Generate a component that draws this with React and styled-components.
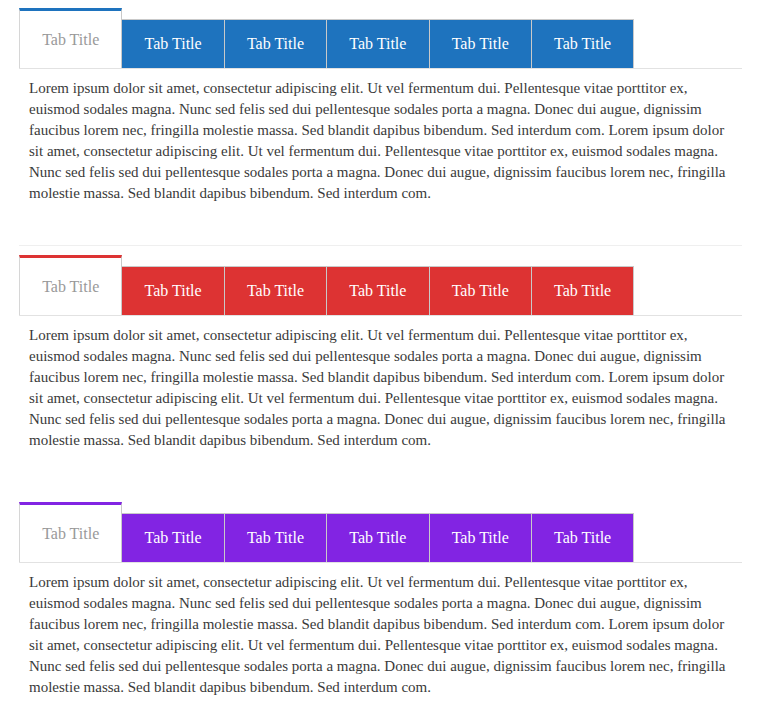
import React from 'react';
import styled, { createGlobalStyle } from 'styled-components';

const GlobalStyle = createGlobalStyle`
  body {
    margin: 0;
    background: #ffffff;
    font-family: "Liberation Serif", "Times New Roman", serif;
  }
`;

const Page = styled.div`
  width: 723px;
  padding: 8px 0 0 19px;
`;

const Section = styled.section`
  padding-bottom: ${(p) => (p.divider ? '41px' : '51px')};
  margin-bottom: ${(p) => (p.divider ? '9px' : '0')};
  border-bottom: ${(p) => (p.divider ? '1px solid #efefef' : 'none')};
`;

const TabBar = styled.div`
  display: flex;
  align-items: flex-end;
  border-bottom: 1px solid #e2e2e2;
`;

const Tab = styled.div`
  box-sizing: border-box;
  width: 103.4px;
  flex-shrink: 0;
  height: ${(p) => (p.active ? '60px' : '49px')};
  margin-left: -1px;
  display: flex;
  align-items: center;
  justify-content: center;
  font-size: 16px;
  border: 1px solid #c9c9c9;
  border-bottom: none;
  border-top: ${(p) => (p.active ? `3px solid ${p.color}` : '1px solid #c9c9c9')};
  background: ${(p) => (p.active ? '#ffffff' : p.color)};
  color: ${(p) => (p.active ? '#999999' : '#ffffff')};
  padding-top: ${(p) => (p.active ? '1px' : '0')};

  &:first-child {
    margin-left: 0;
    border-left-color: #d6d6d6;
  }
`;

const Body = styled.p`
  margin: 0;
  padding: 9px 10px 0 10px;
  font-size: 15px;
  line-height: 21px;
  color: #3a3a3a;
`;

const lorem =
  'Lorem ipsum dolor sit amet, consectetur adipiscing elit. Ut vel fermentum dui. Pellentesque vitae porttitor ex, euismod sodales magna. Nunc sed felis sed dui pellentesque sodales porta a magna. Donec dui augue, dignissim faucibus lorem nec, fringilla molestie massa. Sed blandit dapibus bibendum. Sed interdum com.';

const sections = [
  { color: '#1e73be', divider: true },
  { color: '#dd3333', divider: false },
  { color: '#8224e3', divider: false },
];

const Tabs = ({ color, divider }) => (
  <Section divider={divider}>
    <TabBar>
      {[0, 1, 2, 3, 4, 5].map((i) => (
        <Tab key={i} active={i === 0} color={color}>
          Tab Title
        </Tab>
      ))}
    </TabBar>
    <Body>
      {lorem} {lorem}
    </Body>
  </Section>
);

const App = () => (
  <>
    <GlobalStyle />
    <Page>
      {sections.map((s) => (
        <Tabs key={s.color} color={s.color} divider={s.divider} />
      ))}
    </Page>
  </>
);

export default App;
